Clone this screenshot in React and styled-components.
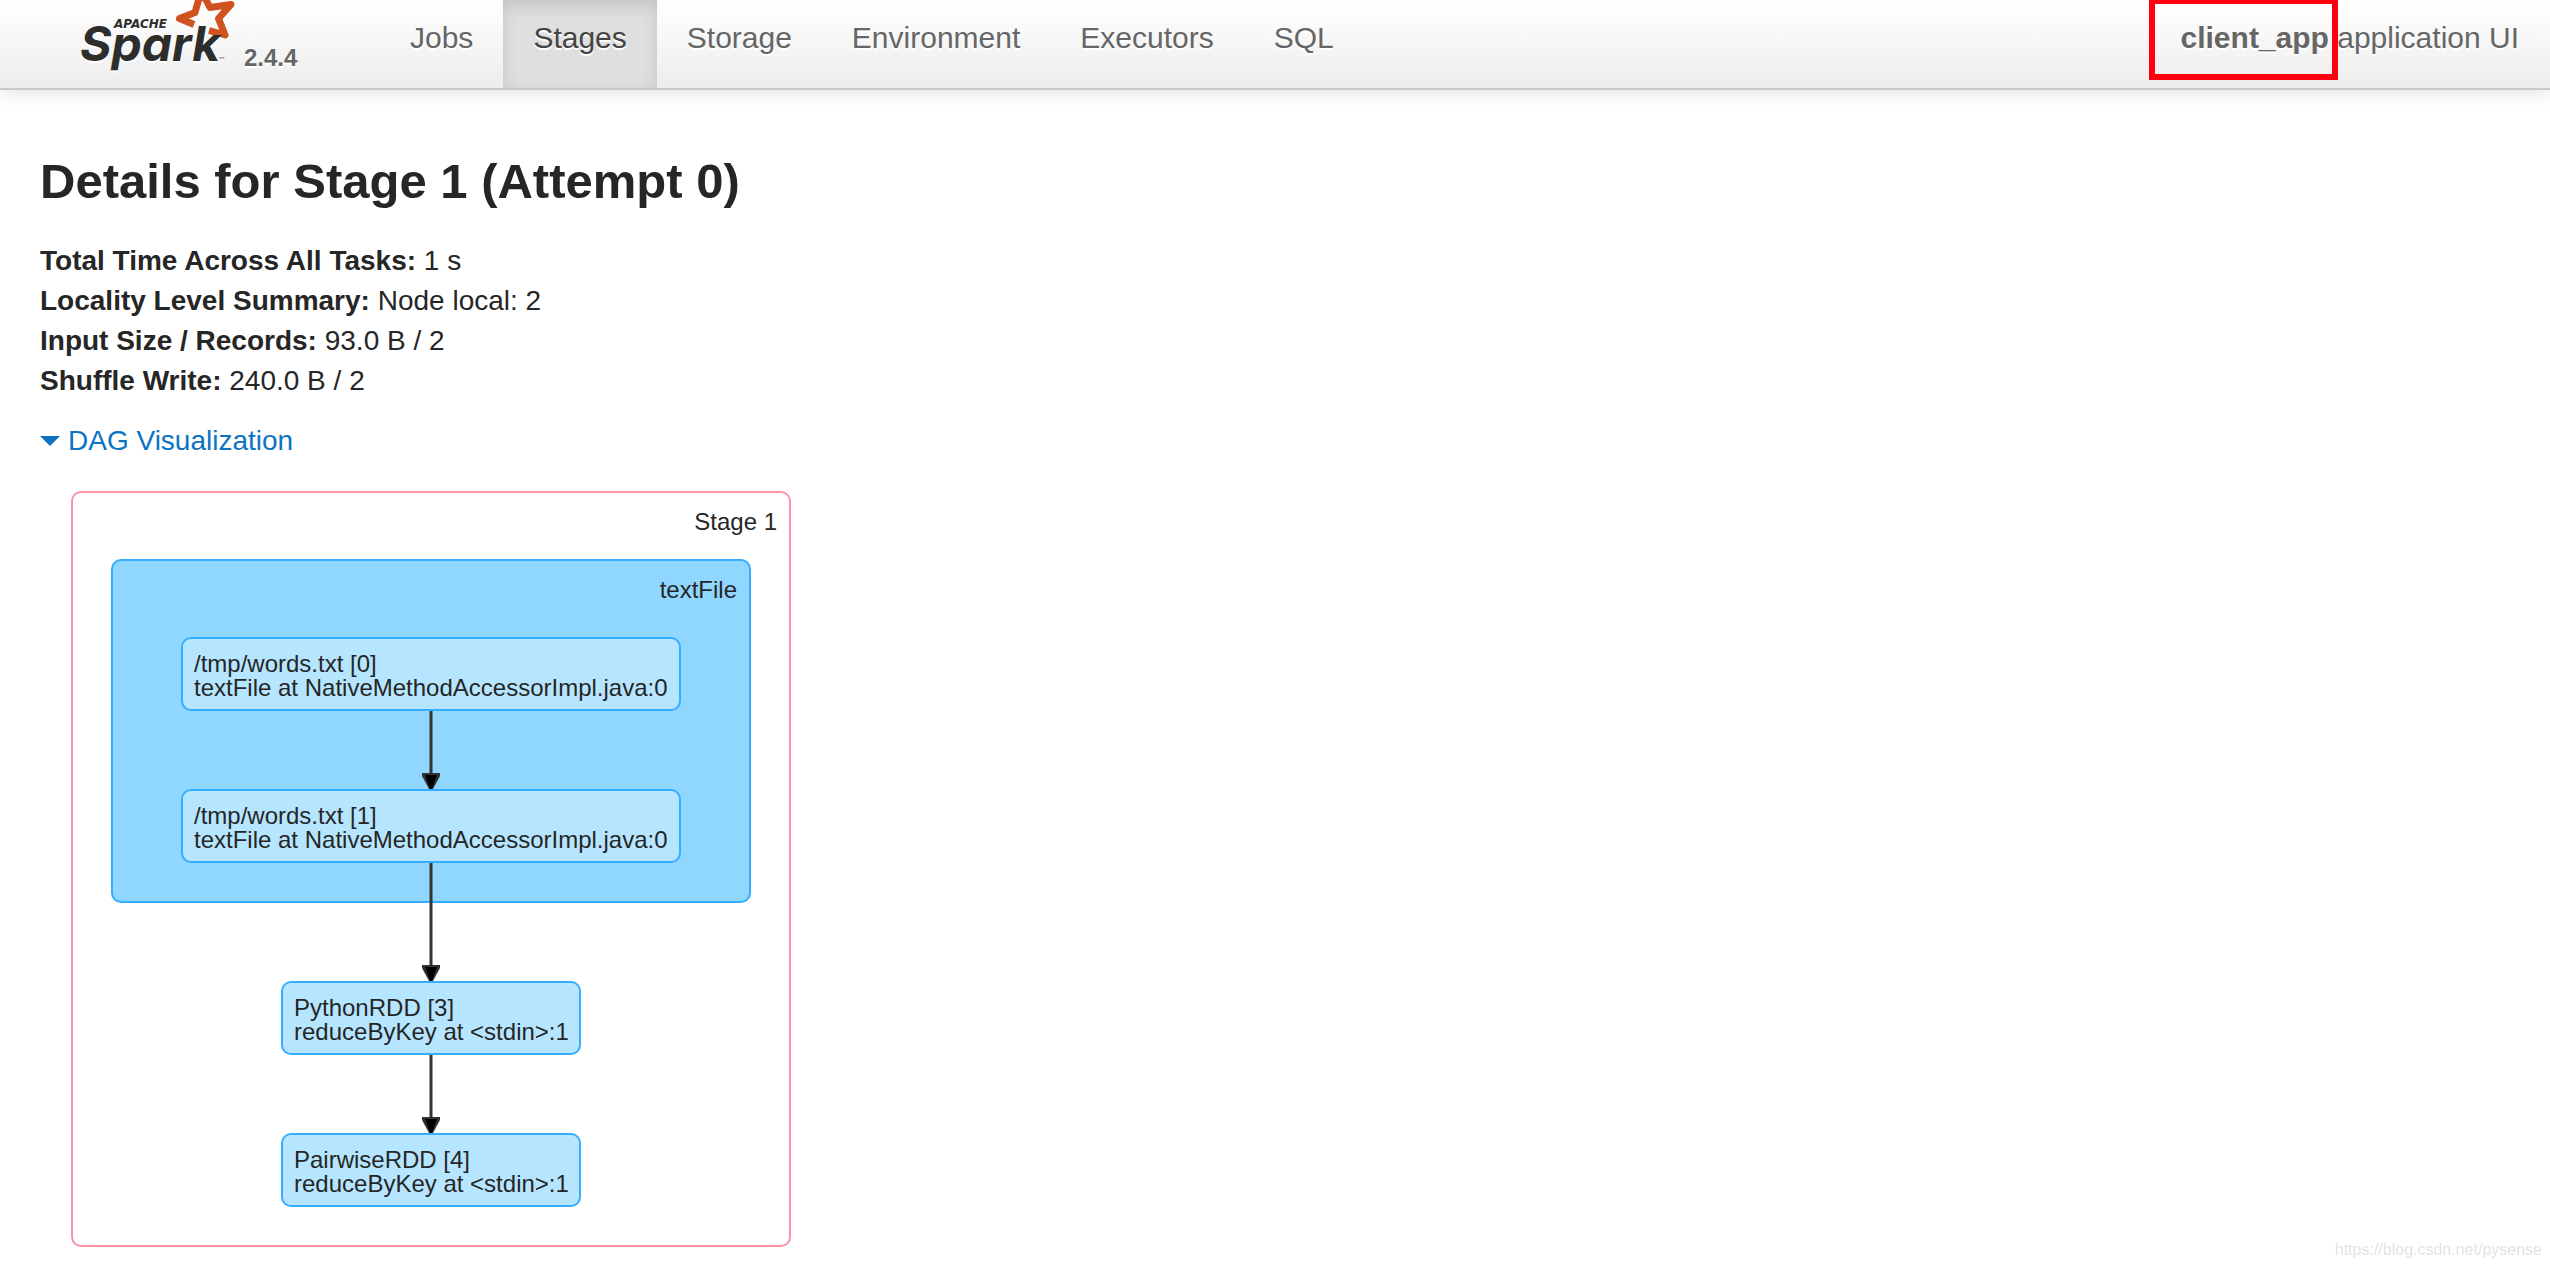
import React from "react";
import styled, { createGlobalStyle } from "styled-components";

const GlobalStyle = createGlobalStyle`
  * { box-sizing: border-box; }
  body {
    margin: 0;
    background: #fff;
    color: #262626;
    font-family: "Liberation Sans", Arial, sans-serif;
    font-size: 28px;
    line-height: 40px;
  }
`;

const Navbar = styled.header`
  position: relative;
  display: flex;
  height: 90px;
  border-bottom: 2px solid #c9c9c9;
  background: linear-gradient(to bottom, #ffffff, #ededed);
  box-shadow: 0 2px 20px rgba(0, 0, 0, 0.13);
  color: #666;
  font-size: 30px;
  text-shadow: 0 2px 0 #fff;
`;

const Brand = styled.a`
  display: flex;
  gap: 8px;
  width: 380px;
  padding-left: 80px;
  color: inherit;
  text-decoration: none;
`;

const Version = styled.span`
  padding-top: 38px;
  font-size: 24px;
  font-weight: bold;
`;

const Tabs = styled.nav`
  display: flex;
  flex: 1;
`;

const Tab = styled.a`
  padding: 18px 30px 0;
  color: ${(p) => (p.$active ? "#444" : "inherit")};
  background: ${(p) => (p.$active ? "#dfdfdf" : "none")};
  box-shadow: ${(p) => (p.$active ? "inset 0 6px 16px rgba(0, 0, 0, 0.125)" : "none")};
  text-decoration: none;
`;

const AppName = styled.p`
  margin: 0;
  padding: 18px 31px 0 0;
`;

const Highlight = styled.span`
  position: absolute;
  top: -2px;
  right: 212px;
  width: 189px;
  height: 82px;
  border: 6px solid #ff0010;
`;

const Content = styled.main`
  padding: 51px 40px 20px;
`;

const Title = styled.h1`
  margin: 0 0 20px;
  font-size: 49px;
  line-height: 80px;
`;

const Summary = styled.ul`
  margin: 0 0 20px;
  padding: 0;
  list-style: none;
`;

const Toggle = styled.a`
  display: flex;
  width: fit-content;
  align-items: center;
  gap: 8px;
  color: #0b73c2;
  text-decoration: none;
`;

const Caret = styled.span`
  border: 10px solid transparent;
  border-top-color: currentColor;
  border-bottom: 0;
`;

const Group = styled.section`
  display: flex;
  flex-direction: column;
  align-items: center;
  border: 2px solid ${(p) => (p.$stage ? "#fb92a8" : "#36adff")};
  border-radius: 10px;
  background: ${(p) => (p.$stage ? "#fff" : "#8fd7ff")};
  padding: ${(p) => (p.$stage ? "17px 38px 38px" : "17px 68px 38px")};
`;

const Dag = styled.div`
  width: fit-content;
  margin: 30px 0 0 31px;
  font-size: 24px;
  line-height: 24px;
`;

const GroupName = styled.h2`
  align-self: flex-end;
  margin: ${(p) => (p.$stage ? "0 -26px 25px 0" : "0 -56px 35px 0")};
  font-size: 24px;
  font-weight: normal;
`;

const Node = styled.div`
  min-width: ${(p) => (p.$wide ? "500px" : "300px")};
  height: 74px;
  padding: 13px 10px 0 11px;
  border: 2px solid #36adff;
  border-radius: 10px;
  background: #b6e6ff;
  white-space: nowrap;
`;

const Arrow = styled.svg`
  display: block;
  position: relative;
  margin-top: ${(p) => (p.$leaving ? "-40px" : "0")};
`;

const Watermark = styled.span`
  position: fixed;
  right: 8px;
  bottom: 8px;
  color: #e2e2e2;
  font-size: 16px;
  line-height: 20px;
`;

const LogoWord = styled.text`
  fill: #2d2d2b;
  font: italic 700 48px Inter, sans-serif;
  font-feature-settings: "cv11";
`;

const LogoSmall = styled.text`
  fill: #2d2d2b;
  font: italic bold 12px "DejaVu Sans", sans-serif;
`;

const LogoMark = styled.text`
  fill: #777;
  font: 8px "DejaVu Sans", sans-serif;
`;

const tabs = ["Jobs", "Stages", "Storage", "Environment", "Executors", "SQL"];

const summary = [
  ["Total Time Across All Tasks:", "1 s"],
  ["Locality Level Summary:", "Node local: 2"],
  ["Input Size / Records:", "93.0 B / 2"],
  ["Shuffle Write:", "240.0 B / 2"],
];

function SparkLogo() {
  return (
    <svg width="156" height="88" viewBox="0 0 156 88" role="img" aria-label="Apache Spark">
      <path
        d="M114 24.500 L99.500 18.500 L115 12.500 L120 -5 L123.500 -5 L130 7.500 L151 4.500 L138.500 18.500 L145 35 L129 30.500"
        fill="none"
        stroke="#d0531f"
        strokeWidth="7"
        strokeLinejoin="round"
      />
      <LogoSmall x="34" y="28">
        APACHE
      </LogoSmall>
      <LogoWord x="0" y="61">
        Spark
      </LogoWord>
      <LogoMark x="138" y="63">
        ™
      </LogoMark>
    </svg>
  );
}

function Edge({ leaving }) {
  const h = leaving ? 118 : 78;
  return (
    <Arrow $leaving={leaving} width="18" height={h} viewBox={`0 0 18 ${h}`} aria-hidden="true">
      <path d={`M9 0V${h - 14}`} stroke="#333" strokeWidth="3" />
      <path d={`M0 ${h - 16}H18V${h - 13}L11 ${h}H7L0 ${h - 13}Z`} fill="#333" />
      <path d={`M3 ${h - 14}H15L10 ${h}H8Z`} fill="#000" />
    </Arrow>
  );
}

export default function App() {
  return (
    <>
      <GlobalStyle />
      <Navbar>
        <Brand href="#">
          <SparkLogo />
          <Version>2.4.4</Version>
        </Brand>
        <Tabs>
          {tabs.map((t) => (
            <Tab key={t} href="#" $active={t === "Stages"}>
              {t}
            </Tab>
          ))}
        </Tabs>
        <AppName>
          <strong>client_app</strong> application UI
        </AppName>
        <Highlight />
      </Navbar>
      <Content>
        <Title>Details for Stage 1 (Attempt 0)</Title>
        <Summary>
          {summary.map(([label, value]) => (
            <li key={label}>
              <strong>{label}</strong> {value}
            </li>
          ))}
        </Summary>
        <Toggle href="#">
          <Caret />
          DAG Visualization
        </Toggle>
        <Dag>
          <Group $stage>
            <GroupName $stage>Stage 1</GroupName>
            <Group>
              <GroupName>textFile</GroupName>
              <Node $wide>
                /tmp/words.txt [0]
                <br />
                textFile at NativeMethodAccessorImpl.java:0
              </Node>
              <Edge />
              <Node $wide>
                /tmp/words.txt [1]
                <br />
                textFile at NativeMethodAccessorImpl.java:0
              </Node>
            </Group>
            <Edge leaving />
            <Node>
              PythonRDD [3]
              <br />
              reduceByKey at &lt;stdin&gt;:1
            </Node>
            <Edge />
            <Node>
              PairwiseRDD [4]
              <br />
              reduceByKey at &lt;stdin&gt;:1
            </Node>
          </Group>
        </Dag>
      </Content>
      <Watermark>https://blog.csdn.net/pysense</Watermark>
    </>
  );
}
